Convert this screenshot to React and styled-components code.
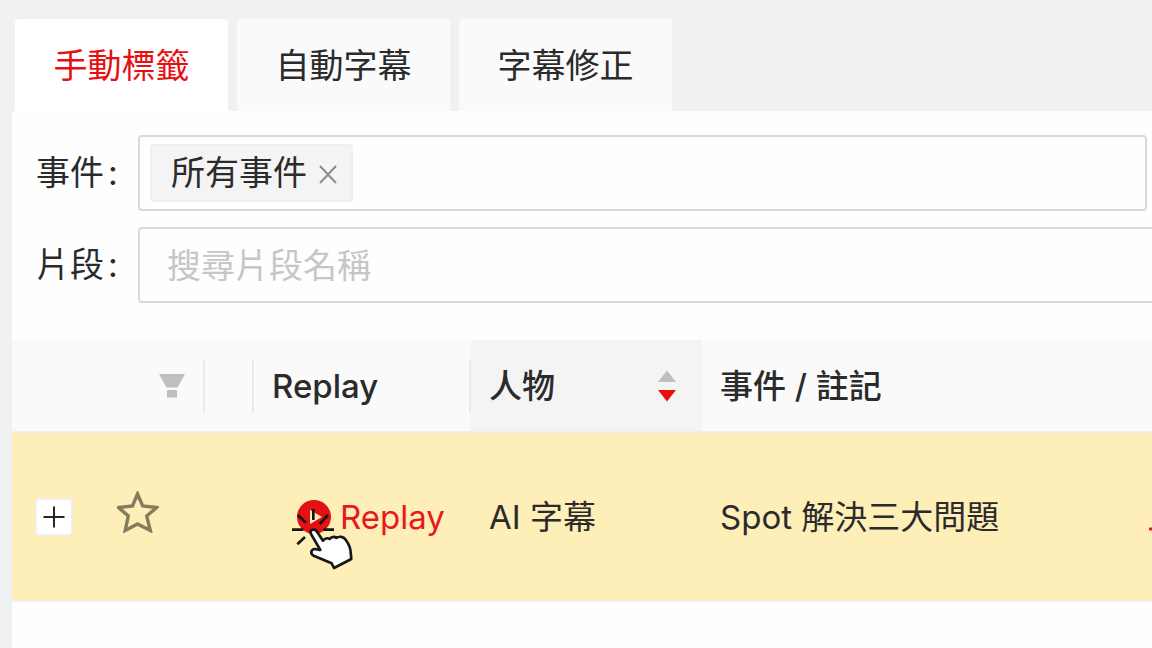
import styled, { createGlobalStyle } from "styled-components";

const GlobalStyle = createGlobalStyle`
  * {
    box-sizing: border-box;
  }
  body {
    margin: 0;
    background-color: #eff1f3;
    color: #2b2b2b;
    font-family: Inter, "Noto Sans CJK TC", sans-serif;
    font-size: 34px;
    line-height: 52px;
  }
  button, input {
    font: inherit;
    color: inherit;
  }
`;

const Page = styled.div`
  display: flex;
  flex-direction: column;
  min-height: 100vh;
  padding: 19px 0 0 12px;
`;

const Tabs = styled.nav`
  display: flex;
  gap: 9px;
  padding-left: 3px;
`;

const Tab = styled.button`
  width: 213px;
  height: 92px;
  padding: 2px 0 0;
  border: none;
  border-radius: 4px 4px 0 0;
  background-color: ${(props) => (props.$active ? "#ffffff" : "#fafafa")};
  color: ${(props) => (props.$active ? "#e80f12" : "inherit")};
  cursor: pointer;
`;

const Panel = styled.main`
  flex: 1;
  padding-top: 24px;
  border-top-left-radius: 4px;
  background-color: #fefefe;
  overflow: hidden;
`;

const Filters = styled.div`
  display: flex;
  flex-direction: column;
  gap: 16px;
  margin-bottom: 37px;
  padding-left: 24px;
`;

const Field = styled.div`
  display: flex;
  align-items: center;
  margin-right: ${(props) => (props.$wide ? "-20px" : "5px")};
`;

const Label = styled.label`
  display: flex;
  gap: 4px;
  width: 102px;
`;

const SelectBox = styled.div`
  display: flex;
  align-items: center;
  flex: 1;
  height: 76px;
  padding: 0 10px;
  border: 2px solid #d9d9d9;
  border-radius: 4px;
`;

const Tag = styled.span`
  display: flex;
  align-items: center;
  gap: 12px;
  height: 58px;
  padding: 0 14px 0 19px;
  border: 2px solid #efefef;
  border-radius: 4px;
  background-color: #f4f4f4;
`;

const TagClose = styled.button`
  display: flex;
  padding: 2px 0 0;
  border: none;
  background: none;
  cursor: pointer;
`;

const TagInput = styled.input`
  flex: 1;
  min-width: 0;
  border: none;
  outline: none;
  background: none;
`;

const TextInput = styled.input`
  flex: 1;
  height: 76px;
  min-width: 0;
  padding: 0 27px;
  border: 2px solid #d9d9d9;
  border-radius: 4px;
  outline: none;
  background: none;
  &::placeholder {
    color: #c6c6c6;
    opacity: 1;
  }
`;

const Table = styled.table`
  width: calc(100% + 90px);
  table-layout: fixed;
  border-collapse: separate;
  border-spacing: 0;
  font-size: 33px;
`;

const Col = styled.col`
  width: ${(props) => props.$width};
`;

const HeadCell = styled.th`
  height: 93px;
  padding: 0 18px;
  border-bottom: 2px solid #efeff1;
  background-color: ${(props) => (props.$sorted ? "#f4f4f4" : "#fafafa")};
  font-weight: 500;
  text-align: left;
`;

const HeadInner = styled.div`
  display: flex;
  align-items: center;
  justify-content: ${(props) => props.$align || "space-between"};
  height: 54px;
  margin: 0 -18px;
  padding: 0 ${(props) => (props.$sorter ? "24px" : "18px")} 0 18px;
  border-right: 2px solid ${(props) => (props.$divider ? "#ebebeb" : "transparent")};
`;

const Cell = styled.td`
  height: 169px;
  padding: 0 18px 0 ${(props) => props.$indent || "18px"};
  border-bottom: 2px solid #efefec;
  background-color: #feeeb8;
`;

const IconButton = styled.button`
  display: flex;
  padding: 0;
  border: none;
  background: none;
  cursor: pointer;
`;

const StarButton = styled(IconButton)`
  padding-bottom: 10px;
`;

const ExpandButton = styled(IconButton)`
  align-items: center;
  justify-content: center;
  width: 38px;
  height: 38px;
  border: 2px solid #f0f0f0;
  border-radius: 4px;
  background-color: #ffffff;
`;

const ReplayLink = styled.a`
  position: relative;
  display: flex;
  align-items: center;
  gap: 9px;
  color: #e8191c;
  text-decoration: none;
`;

const Pointer = styled.svg`
  position: absolute;
  top: 17px;
  left: -6px;
`;

const MoreLink = styled.a`
  display: flex;
  padding-top: 6px;
`;

function CloseIcon() {
  return (
    <svg width="18" height="20" viewBox="0 0 18 20" stroke="#8c8c8c" strokeWidth="2">
      <path d="M1 2l16 17M17 2L1 19" />
    </svg>
  );
}

function FilterIcon() {
  return (
    <svg width="26" height="24" viewBox="0 0 26 24" fill="#bfbfbf">
      <path d="M0 0h26l-7.5 13.5h-11z" />
      <path d="M8 16h10v7.5H8z" />
    </svg>
  );
}

function SortIcon() {
  return (
    <svg width="18" height="32" viewBox="0 0 18 32">
      <path d="M9 0.500l9 11.500H0z" fill="#bfbfbf" />
      <path d="M0 20h18l-9 11.500z" fill="#e80f12" />
    </svg>
  );
}

function StarIcon() {
  return (
    <svg width="42" height="42" viewBox="0 0 42 42" fill="none" stroke="#857b5e" strokeWidth="3.400">
      <path d="M20.500 3l5.200 12 14 1.500-10 8.500 3.600 14.500-12.800-6.500-12.300 6.500L11.300 25 1.500 16.500l14-1.500z" />
    </svg>
  );
}

function PlusIcon() {
  return (
    <svg width="22" height="22" viewBox="0 0 22 22" stroke="#262626" strokeWidth="2">
      <path d="M11 0.500v21M0.500 11h21" />
    </svg>
  );
}

function PlayIcon() {
  return (
    <svg width="34" height="34" viewBox="0 0 34 34">
      <circle cx="17" cy="17" r="17" fill="#e31114" />
      <path d="M13 10l12 7-12 7z" fill="#fdeeb9" />
    </svg>
  );
}

function HandPointer() {
  return (
    <Pointer width="64" height="64" viewBox="90 81 192 192" aria-hidden="true">
      <path
        d="M93 146h34M187 146h32M157 84v33M110 102l25 23M201 102l-25 27M109 190l23-22"
        fill="none"
        stroke="#171717"
        strokeWidth="8"
      />
      <path
        d="M149 157c-3-11 12-15 18-6l19 28c5-7 14-9 20-5 5-7 14-8 20-3 8-6 21-5 28 5 10 14 15 26 15 38l2 20-52 27-7-14-54-23c-11-5-9-19 4-20 6 0 12 4 16 3z"
        fill="#ffffff"
        stroke="#171717"
        strokeWidth="8"
        strokeLinejoin="round"
      />
    </Pointer>
  );
}

function DownloadIcon() {
  return (
    <svg width="34" height="34" viewBox="0 0 34 34" fill="none" stroke="#e8191c" strokeWidth="3">
      <path d="M0 26h34M17 2v18M9 12l8 8 8-8" />
    </svg>
  );
}

const tabs = ["手動標籤", "自動字幕", "字幕修正"];
const rows = [{ id: 1, person: "AI 字幕", note: "Spot 解決三大問題" }];

function Row({ person, note }) {
  return (
    <tr>
      <Cell $indent="23px">
        <ExpandButton aria-label="展開">
          <PlusIcon />
        </ExpandButton>
      </Cell>
      <Cell $indent="20px">
        <StarButton aria-label="收藏">
          <StarIcon />
        </StarButton>
      </Cell>
      <Cell />
      <Cell $indent="43px">
        <ReplayLink href="#replay">
          <PlayIcon />
          Replay
          <HandPointer />
        </ReplayLink>
      </Cell>
      <Cell>{person}</Cell>
      <Cell>{note}</Cell>
      <Cell>
        <MoreLink href="#download" aria-label="下載">
          <DownloadIcon />
        </MoreLink>
      </Cell>
    </tr>
  );
}

function App() {
  return (
    <>
      <GlobalStyle />
      <Page>
        <Tabs>
          {tabs.map((tab, index) => (
            <Tab key={tab} $active={index === 0}>
              {tab}
            </Tab>
          ))}
        </Tabs>
        <Panel>
          <Filters>
            <Field>
              <Label htmlFor="event">
                事件<span>:</span>
              </Label>
              <SelectBox>
                <Tag>
                  所有事件
                  <TagClose aria-label="移除">
                    <CloseIcon />
                  </TagClose>
                </Tag>
                <TagInput id="event" />
              </SelectBox>
            </Field>
            <Field $wide>
              <Label htmlFor="clip">
                片段<span>:</span>
              </Label>
              <TextInput id="clip" placeholder="搜尋片段名稱" />
            </Field>
          </Filters>
          <Table>
            <colgroup>
              <Col $width="85px" />
              <Col $width="108px" />
              <Col $width="49px" />
              <Col $width="217px" />
              <Col $width="231px" />
              <Col $width="auto" />
              <Col $width="111px" />
            </colgroup>
            <thead>
              <tr>
                <HeadCell />
                <HeadCell>
                  <HeadInner $divider $align="flex-end">
                    <FilterIcon />
                  </HeadInner>
                </HeadCell>
                <HeadCell>
                  <HeadInner $divider />
                </HeadCell>
                <HeadCell>
                  <HeadInner $divider>Replay</HeadInner>
                </HeadCell>
                <HeadCell $sorted>
                  <HeadInner $sorter>
                    人物
                    <SortIcon />
                  </HeadInner>
                </HeadCell>
                <HeadCell>
                  <HeadInner>事件 / 註記</HeadInner>
                </HeadCell>
                <HeadCell />
              </tr>
            </thead>
            <tbody>
              {rows.map((row) => (
                <Row key={row.id} person={row.person} note={row.note} />
              ))}
            </tbody>
          </Table>
        </Panel>
      </Page>
    </>
  );
}

export default App;
